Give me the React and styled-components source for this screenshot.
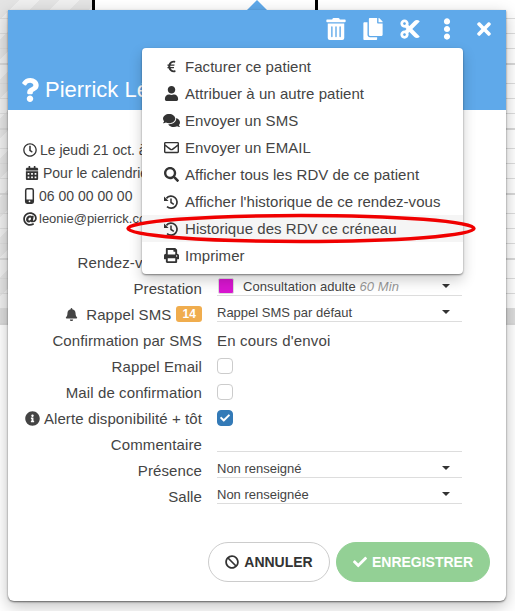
import styled, { createGlobalStyle } from "styled-components";
import {
  FaTrashAlt, FaCopy, FaCut, FaEllipsisV, FaTimes, FaQuestion, FaEuroSign, FaUser, FaComments,
  FaRegEnvelope, FaSearch, FaPrint, FaRegClock, FaCalendarAlt, FaAt,
  FaBell, FaInfoCircle, FaBan, FaCheck,
} from "react-icons/fa";

const GlobalStyle = createGlobalStyle`
    html, body {
        margin: 0;
        padding: 0;
        background: #fff;
    }
    body {
        font-family: "Liberation Sans", Arial, sans-serif;
        color: #444;
    }
`;

const Page = styled.div`
    position: relative;
    width: 515px;
    height: 611px;
    overflow: hidden;
    box-sizing: border-box;
    padding: 10px 9px 0 8px;
    background-color: #fff;
    background-image:
        linear-gradient(#000, #000),
        linear-gradient(#000, #000),
        repeating-linear-gradient(to bottom, transparent 0 63px, #d8d8d8 63px 65px),
        repeating-linear-gradient(to bottom, transparent 0 18px, #ddd 18px 19px, transparent 19px 33px, #ddd 33px 34px, transparent 34px 48px, #ddd 48px 49px, transparent 49px 65px),
        linear-gradient(#dcdcdc, #dcdcdc),
        repeating-linear-gradient(135deg, #e4e4e4 0 14px, #efefef 14px 28px);
    background-size: 3px 10px, 3px 10px, 100% 325px, 100% 310px, 100% 16px, 92px 325px;
    background-position: 92px 0, 315px 0, 0 0, 0 0, 0 309px, 0 0;
    background-repeat: no-repeat;
`;

const Arrow = styled.div`
    position: absolute;
    left: 247px;
    top: 0;
    width: 0;
    height: 0;
    border-left: 10px solid transparent;
    border-right: 10px solid transparent;
    border-bottom: 10px solid #5fa9ea;
`;

const Card = styled.div`
    position: relative;
    width: 498px;
    height: 591px;
    display: flex;
    flex-direction: column;
    background: #fff;
    border-radius: 0 0 6px 6px;
    box-shadow: 0 1px 2px rgba(0, 0, 0, 0.55), 0 5px 16px rgba(0, 0, 0, 0.25);
`;

const Header = styled.header`
    height: 100px;
    flex: none;
    display: flex;
    flex-direction: column;
    justify-content: space-between;
    background: #5fa9ea;
    color: #fff;
`;

const Toolbar = styled.div`
    display: flex;
    justify-content: flex-end;
    padding: 8px 4px 0 0;
`;

const ToolButton = styled.span`
    width: 37px;
    height: 22px;
    display: flex;
    align-items: center;
    justify-content: center;
    font-size: ${(props) => props.$size || 22}px;
`;

const Title = styled.h1`
    margin: 0;
    padding: 0 0 5px 10px;
    display: flex;
    align-items: center;
    gap: 3px;
    font-size: 22px;
    line-height: 30px;
    font-weight: 400;
    white-space: nowrap;
`;

const Infos = styled.div`
    flex: none;
    padding: 28px 0 0 14px;
    height: 139px;
    box-sizing: border-box;
`;

const InfoLine = styled.div`
    height: 23px;
    display: flex;
    align-items: center;
    font-size: ${(props) => props.$size || 14}px;
    white-space: nowrap;
`;

const InfoIcon = styled.span`
    width: ${(props) => props.$width || 18}px;
    flex: none;
    display: flex;
    justify-content: center;
    font-size: 14px;
    color: #333;
    padding-right: 2px;
    box-sizing: border-box;
`;

const Form = styled.div`
    flex: none;
    display: flex;
    flex-direction: column;
`;

const Row = styled.div`
    height: 26px;
    display: grid;
    grid-template-columns: 194px 245px;
    column-gap: 15px;
    align-items: center;
`;

const Label = styled.label`
    display: flex;
    justify-content: flex-end;
    align-items: center;
    gap: 4px;
    padding-right: ${(props) => props.$inset || 0}px;
    font-size: 15px;
    letter-spacing: 0.1px;
    color: #444;
    white-space: nowrap;
`;

const Badge = styled.span`
    background: #f0ad4e;
    color: #fff;
    font-size: 12px;
    font-weight: 700;
    line-height: 16px;
    padding: 0 6px;
    border-radius: 3px;
    margin-left: 1px;
`;

const Select = styled.div`
    height: 18px;
    margin-bottom: 3px;
    display: flex;
    align-items: center;
    gap: 9px;
    border-bottom: 1px solid #ddd;
    font-size: 13px;
    color: #444;
    white-space: nowrap;
`;

const Caret = styled.span`
    margin-left: auto;
    margin-right: 12px;
    width: 0;
    height: 0;
    border-left: 4px solid transparent;
    border-right: 4px solid transparent;
    border-top: 4px solid #333;
`;

const Swatch = styled.span`
    width: 16px;
    height: 16px;
    margin-left: 1px;
    background: #d816d0;
    border-radius: 2px;
    border: 1px solid #ddd;
    box-sizing: border-box;
`;

const PrestationName = styled.span`
    letter-spacing: 0.08px;
`;

const Muted = styled.em`
    color: #999;
`;

const Value = styled.div`
    font-size: 15px;
    letter-spacing: 0.2px;
    color: #444;
`;

const Checkbox = styled.span`
    width: 16px;
    height: 16px;
    box-sizing: border-box;
    display: flex;
    align-items: center;
    justify-content: center;
    border-radius: 4px;
    border: 1px solid ${(props) => (props.$checked ? "#337ab7" : "#ccc")};
    background: ${(props) => (props.$checked ? "#337ab7" : "#fff")};
    color: #fff;
    font-size: 10px;
`;

const CommentField = styled.div`
    height: 18px;
    margin-bottom: 3px;
    border-bottom: 1px solid #ddd;
`;

const Footer = styled.footer`
    flex: none;
    margin-top: 33px;
    padding-right: 16px;
    display: flex;
    justify-content: flex-end;
    gap: 6px;
`;

const Button = styled.button`
    height: 40px;
    width: ${(props) => props.$width}px;
    border-radius: 20px;
    display: flex;
    align-items: center;
    justify-content: center;
    gap: 5px;
    font-family: inherit;
    font-size: 14px;
    font-weight: 700;
    padding: 0;
    border: 1px solid ${(props) => (props.$primary ? "#93d095" : "#ccc")};
    background: ${(props) => (props.$primary ? "#93d095" : "#fff")};
    color: ${(props) => (props.$primary ? "#fff" : "#333")};
`;

const Menu = styled.ul`
    position: absolute;
    left: 134px;
    top: 38px;
    width: 321px;
    height: 226px;
    margin: 0;
    padding: 5px 0 0;
    box-sizing: border-box;
    list-style: none;
    background: #fff;
    border-radius: 4px;
    box-shadow: 0 1px 2px rgba(0, 0, 0, 0.45), 0 6px 14px rgba(0, 0, 0, 0.2);
`;

const MenuItem = styled.li`
    height: 27px;
    display: flex;
    align-items: center;
    padding-left: 18px;
    font-size: 15px;
    letter-spacing: 0.05px;
    color: #444;
    background: ${(props) => (props.$active ? "#f5f5f5" : "transparent")};
    white-space: nowrap;
`;

const MenuIcon = styled.span`
    width: 22px;
    margin-right: 3px;
    flex: none;
    display: flex;
    justify-content: center;
    font-size: 15px;
    color: #333;
`;

const Circle = styled.svg`
    position: absolute;
    left: 122px;
    top: 210px;
    pointer-events: none;
`;

const HistoryIcon = () => (
  <svg width="16" height="16" viewBox="0 0 16 16" fill="none" stroke="currentColor">
    <path d="M3.4 4.4 A6 6 0 1 1 4 12.6" strokeWidth="1.7" />
    <path d="M1 2.4 V7 H5.6 Z" fill="currentColor" stroke="none" />
    <path d="M8 4.5 V8.5 L10.8 10.3" strokeWidth="1.5" />
  </svg>
);

const PhoneIcon = () => (
  <svg width="11" height="16" viewBox="0 0 11 16">
    <rect x="1.7" y="0.8" width="7.6" height="14.4" rx="1.6" fill="none" stroke="currentColor" strokeWidth="1.5" />
    <rect x="1.7" y="11.5" width="7.6" height="3.7" fill="currentColor" />
    <circle cx="5.5" cy="13.3" r="0.9" fill="#fff" />
  </svg>
);

const menuItems = [
  { icon: <FaEuroSign size={13} />, text: "Facturer ce patient" },
  { icon: <FaUser />, text: "Attribuer à un autre patient" },
  { icon: <FaComments size={17} />, text: "Envoyer un SMS" },
  { icon: <FaRegEnvelope />, text: "Envoyer un EMAIL" },
  { icon: <FaSearch />, text: "Afficher tous les RDV de ce patient" },
  { icon: <HistoryIcon />, text: "Afficher l'historique de ce rendez-vous" },
  { icon: <HistoryIcon />, text: "Historique des RDV ce créneau", active: true },
  { icon: <FaPrint />, text: "Imprimer" },
];

export default function App() {
  return (
    <Page>
      <GlobalStyle />
      <Arrow />
      <Card>
        <Header>
          <Toolbar>
            <ToolButton><FaTrashAlt /></ToolButton>
            <ToolButton><FaCopy /></ToolButton>
            <ToolButton><FaCut /></ToolButton>
            <ToolButton><FaEllipsisV /></ToolButton>
            <ToolButton $size={20}><FaTimes /></ToolButton>
          </Toolbar>
          <Title>
            <FaQuestion size={24} />
            Pierrick Léonie
          </Title>
        </Header>
        <Infos>
          <InfoLine><InfoIcon><FaRegClock /></InfoIcon>Le jeudi 21 oct. à 09:00</InfoLine>
          <InfoLine><InfoIcon $width={21}><FaCalendarAlt /></InfoIcon>Pour le calendrier</InfoLine>
          <InfoLine><InfoIcon $width={17}><PhoneIcon /></InfoIcon>06 00 00 00 00</InfoLine>
          <InfoLine $size={13}><InfoIcon $width={17}><FaAt /></InfoIcon>leonie@pierrick.com</InfoLine>
        </Infos>
        <Form>
          <Row><Label $inset={35}>Rendez-vous</Label><Value /></Row>
          <Row>
            <Label>Prestation</Label>
            <Select>
              <Swatch />
              <PrestationName>Consultation adulte <Muted>60 Min</Muted></PrestationName>
              <Caret />
            </Select>
          </Row>
          <Row>
            <Label><FaBell size={13} />&nbsp;Rappel SMS <Badge>14</Badge></Label>
            <Select>Rappel SMS par défaut<Caret /></Select>
          </Row>
          <Row><Label>Confirmation par SMS</Label><Value>En cours d'envoi</Value></Row>
          <Row><Label>Rappel Email</Label><Checkbox /></Row>
          <Row><Label>Mail de confirmation</Label><Checkbox /></Row>
          <Row>
            <Label><FaInfoCircle size={15} />Alerte disponibilité + tôt</Label>
            <Checkbox $checked><FaCheck /></Checkbox>
          </Row>
          <Row><Label>Commentaire</Label><CommentField /></Row>
          <Row><Label>Présence</Label><Select>Non renseigné<Caret /></Select></Row>
          <Row><Label>Salle</Label><Select>Non renseignée<Caret /></Select></Row>
        </Form>
        <Footer>
          <Button $width={122}><FaBan size={14} />ANNULER</Button>
          <Button $width={154} $primary><FaCheck size={14} />ENREGISTRER</Button>
        </Footer>
        <Menu>
          {menuItems.map((item) => (
            <MenuItem key={item.text} $active={item.active}>
              <MenuIcon>{item.icon}</MenuIcon>
              {item.text}
            </MenuItem>
          ))}
        </Menu>
      </Card>
      <Circle width="360" height="40" viewBox="0 0 360 40">
        <ellipse cx="179" cy="18.5" rx="173" ry="13" fill="none" stroke="#f00000" strokeWidth="3.5" />
      </Circle>
    </Page>
  );
}
